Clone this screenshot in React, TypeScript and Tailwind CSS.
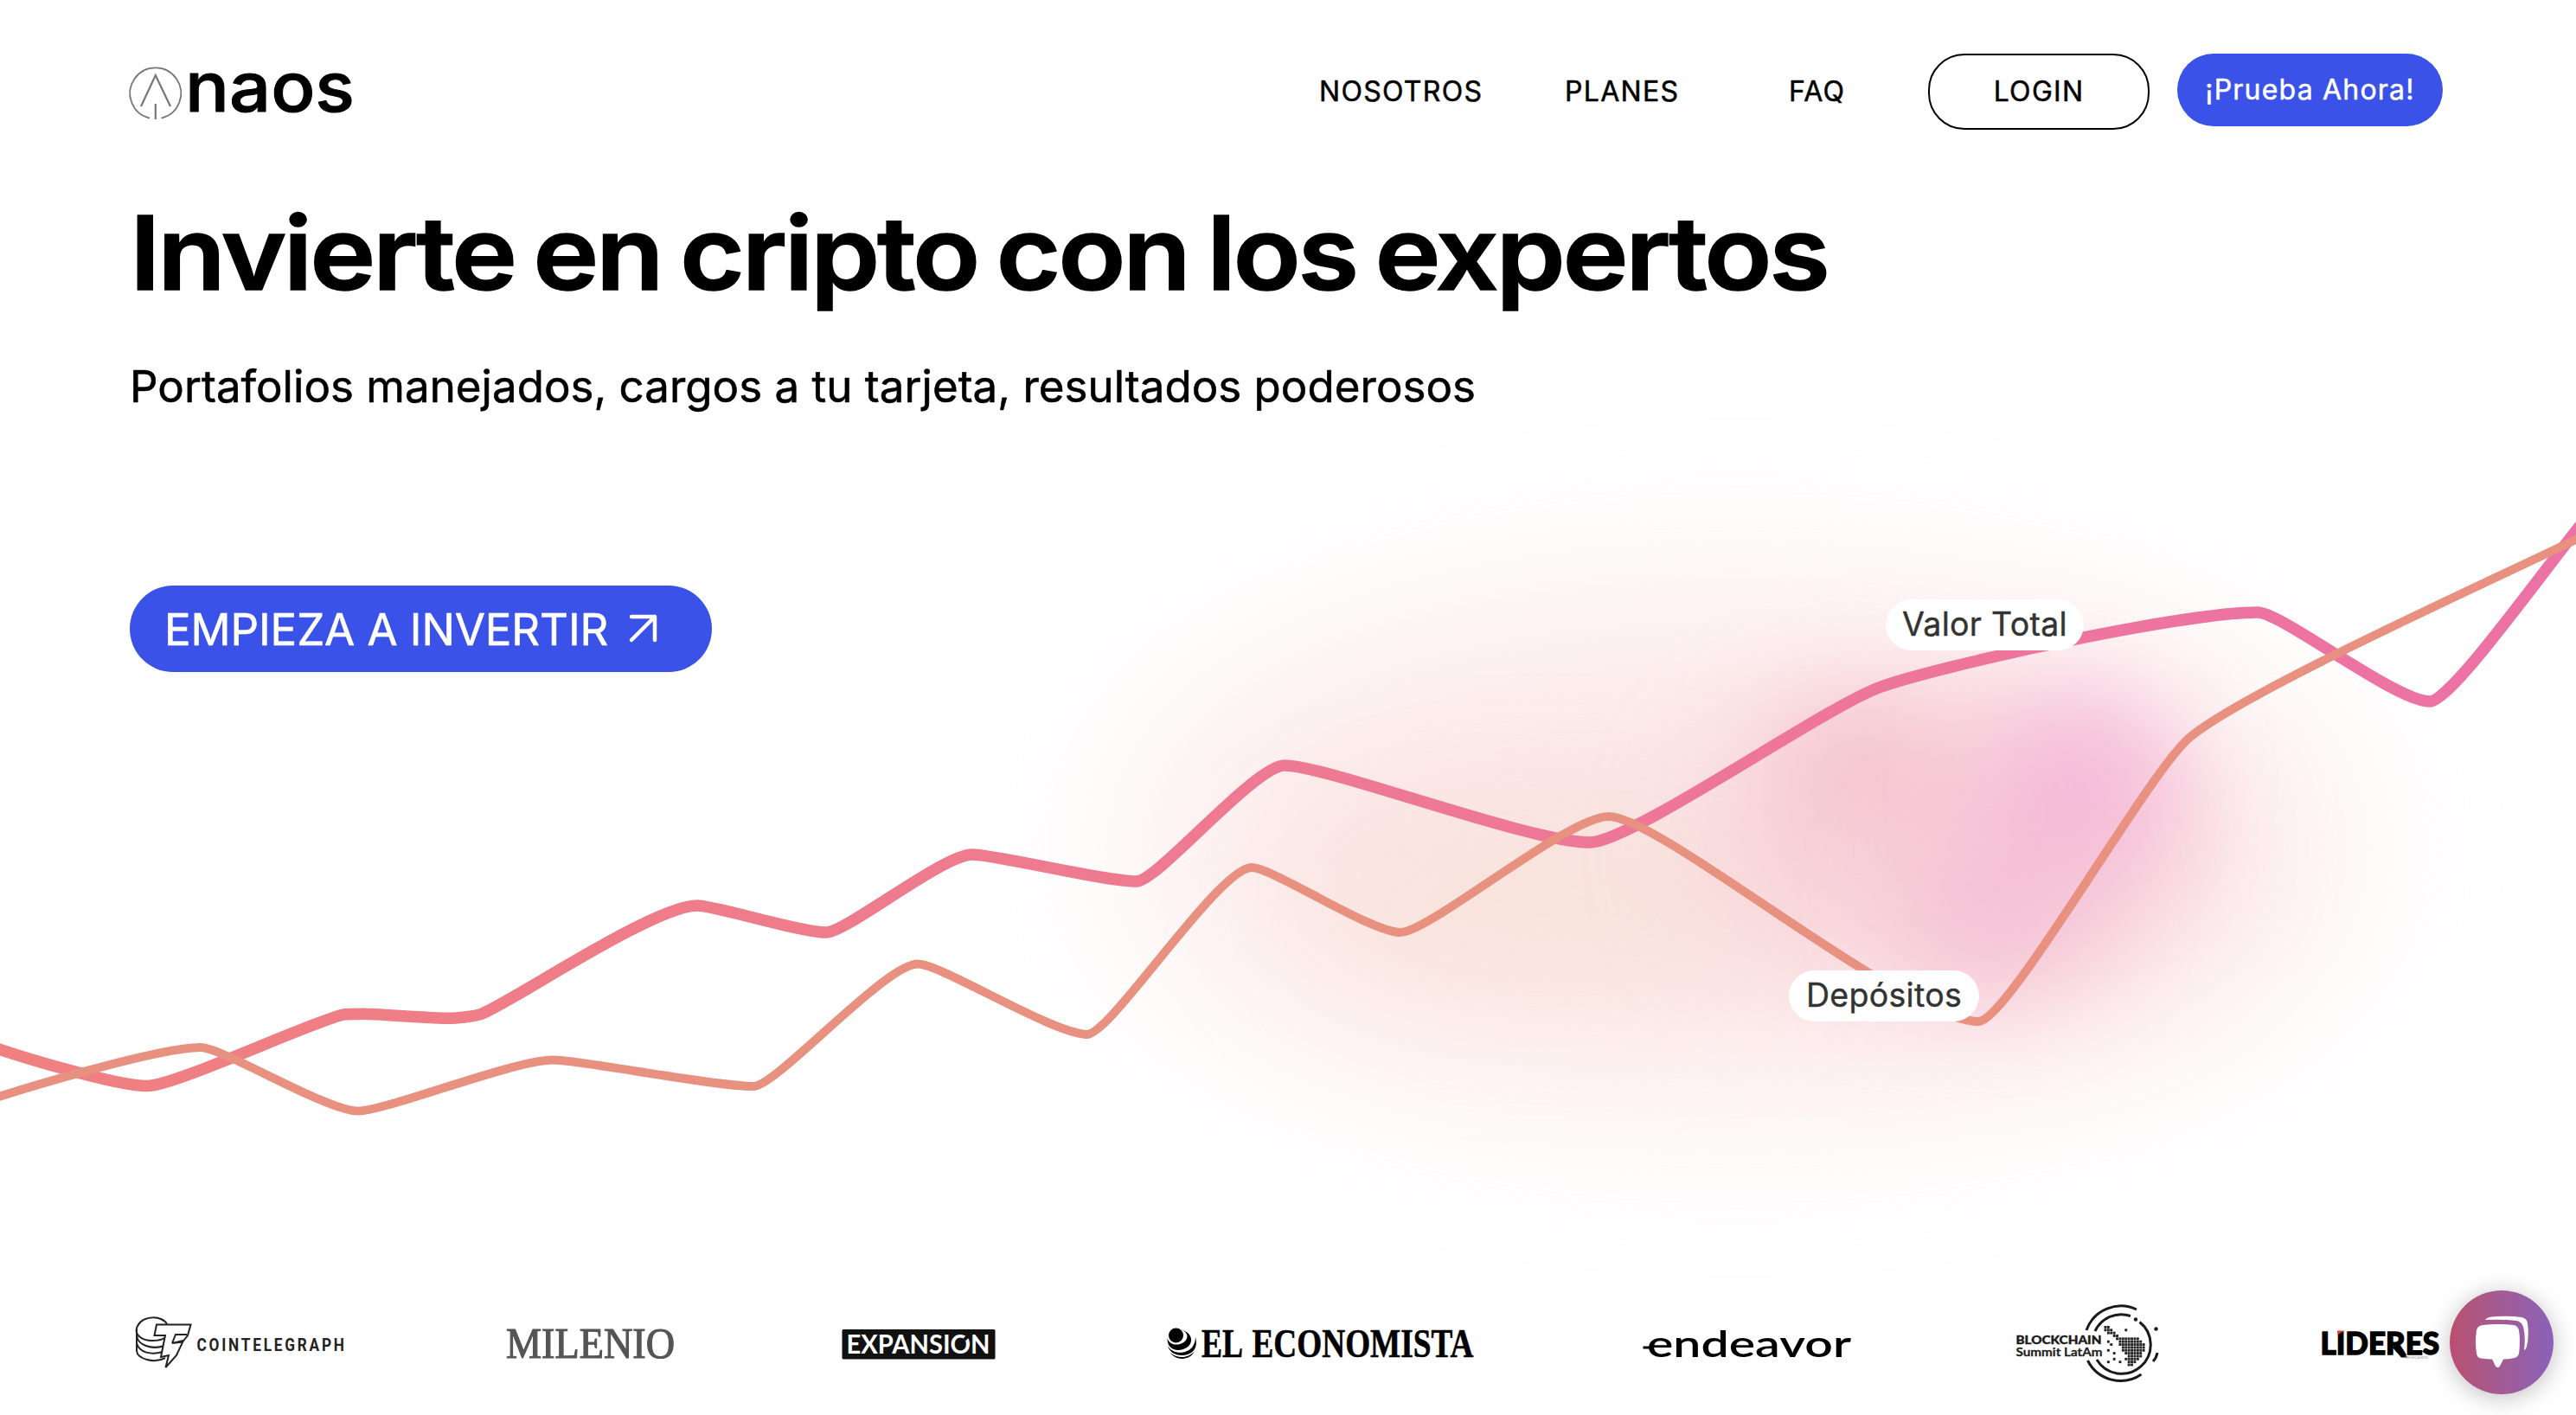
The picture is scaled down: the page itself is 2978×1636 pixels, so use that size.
import React from "react";

type Pt = [number, number, number?];

/* Vertices of a curve: x, y and an optional slope at the vertex (flat when left out). */
const total: Pt[] = [
  [-20, 1206, 0.4], [170, 1255.6], [395, 1173.5, -0.27], [420, 1172.3], [520, 1177.3], [556, 1172.5, -0.38], [806, 1047], [955, 1078], [1124, 988],
  [1314, 1019], [1485, 885], [1838, 974], [2172, 795, -0.38], [2610, 708], [2809, 811], [3000, 587, -1.1],
];
const deposits: Pt[] = [
  [-20, 1274, -0.33], [232, 1211], [414, 1284.6], [639, 1225.6], [871, 1256], [1061, 1114.6], [1257, 1196],
  [1447, 1003], [1619, 1078], [1860, 944], [2287, 1181], [2531, 853, -0.85], [3000, 613, -0.5],
];

function curve(points: Pt[]): string {
  let d = `M${points[0][0]} ${points[0][1]}`;
  for (let i = 1; i < points.length; i++) {
    const [x0, y0, s0 = 0] = points[i - 1];
    const [x1, y1, s1 = 0] = points[i];
    const a = (x1 - x0) * 0.14;
    const b = (x1 - x0) * 0.2;
    d += `C${x0 + a} ${y0 + a * s0} ${x1 - b} ${y1 - b * s1} ${x1} ${y1}`;
  }
  return d;
}

function Chart() {
  return (
    <svg className="absolute inset-0" width="2978" height="1636" viewBox="0 0 2978 1636" fill="none">
      <defs>
        <linearGradient id="total" x1="0" y1="0" x2="2978" y2="0" gradientUnits="userSpaceOnUse">
          <stop stopColor="#f08080" />
          <stop offset="1" stopColor="#ec72a5" />
        </linearGradient>
        <filter id="b130" x="-100%" y="-100%" width="300%" height="300%"><feGaussianBlur stdDeviation="118" /></filter>
        <filter id="b70" x="-100%" y="-100%" width="300%" height="300%"><feGaussianBlur stdDeviation="75" /></filter>
        <filter id="b50" x="-100%" y="-100%" width="300%" height="300%"><feGaussianBlur stdDeviation="58" /></filter>
      </defs>
      <ellipse cx="2010" cy="980" rx="680" ry="265" fill="#f6cccb" opacity=".5" filter="url(#b130)" />
      <ellipse cx="1780" cy="1050" rx="290" ry="110" fill="#f7dfd3" opacity=".52" filter="url(#b70)" />
      <ellipse cx="2270" cy="980" rx="290" ry="170" fill="#f6c0d0" opacity=".5" filter="url(#b70)" />
      <ellipse cx="2150" cy="880" rx="115" ry="75" fill="#f1b0bd" opacity=".5" filter="url(#b50)" />
      <ellipse cx="2405" cy="905" rx="110" ry="105" fill="#f3a8d6" opacity=".62" filter="url(#b50)" />
      <ellipse cx="2310" cy="1050" rx="115" ry="100" fill="#f2b2d0" opacity=".55" filter="url(#b50)" />
      <path d={curve(total)} stroke="url(#total)" strokeWidth="13.5" />
      <path d={curve(deposits)} stroke="#e89180" strokeWidth="10" />
    </svg>
  );
}

function NaosLogo() {
  return (
    <svg className="absolute left-[150px] top-[50px] overflow-visible" width="270" height="110" viewBox="150 50 270 110" fill="none">
      <path d="M173 136.600A29.500 29.500 0 1 1 186.500 136.600" stroke="#777" strokeWidth="1.800" />
      <path d="M163 123 179.800 87 197 123M179.800 120V138" stroke="#777" strokeWidth="2.200" />
      <text x="214" y="129" fontFamily="Inter" fontWeight="500" fontSize="80" stroke="#000" strokeWidth="1" textLength="196" lengthAdjust="spacingAndGlyphs" fill="#000">naos</text>
    </svg>
  );
}

function Cointelegraph() {
  return (
    <svg className="overflow-visible" width="245" height="100" viewBox="155 1502 245 100" fill="none" stroke="#222" strokeWidth="2">
      <path d="M193 1531C188 1521 166 1520 159 1533C154 1543 164 1550 176 1550C182 1550 187 1549 190 1547" />
      <path d="M158 1536V1562C159 1571 178 1577 191 1570M158 1544C159 1555 175 1561 190 1556M158 1553C161 1564 175 1567 188 1563" />
      <path d="M181 1531.500H220L217 1549H212L211 1552L206 1553L202 1560L212 1549L201 1569L192 1582L195 1567L185 1571L190 1551L192 1544L178 1543Z" fill="#fff" stroke="none" />
      <path d="M181 1531.500H220.500L217 1544L213 1549L211 1551.500L199 1553L212 1550L204 1567L191.500 1581L195 1567L186 1569L191 1544H178.500ZM216 1543H203L199 1553" />
      <g transform="translate(227.500 1561.500) scale(.84 1)">
        <text x="0" y="0" fontFamily="Roboto" fontWeight="700" fontSize="20.500" textLength="203" stroke="none" fill="#222">COINTELEGRAPH</text>
      </g>
    </svg>
  );
}

function Milenio() {
  return (
    <svg className="overflow-visible" width="200" height="100" viewBox="582 1502 200 100">
      <text x="585" y="1569.500" fontFamily="Liberation Serif" fontSize="50" fill="#555" stroke="#555" strokeWidth="1.200" textLength="195" lengthAdjust="spacingAndGlyphs">MILENIO</text>
    </svg>
  );
}

function Expansion() {
  return (
    <svg className="overflow-visible" width="178" height="100" viewBox="973 1502 178 100">
      <rect x="973.500" y="1537" width="177" height="34.500" rx="1.500" fill="#111" />
      <text x="978.500" y="1565" fontFamily="Lato" fontWeight="700" fontSize="30" fill="#fff" textLength="166" lengthAdjust="spacingAndGlyphs">EXPANSION</text>
      <path d="M1115 1549 1121 1542" stroke="#111" strokeWidth="4" />
    </svg>
  );
}

function Economista() {
  return (
    <svg className="overflow-visible" width="360" height="100" viewBox="1347 1502 360 100">
      <circle cx="1359.500" cy="1544" r="8.500" />
      <path d="M1363 1537C1376 1539 1375 1551 1364 1554C1357 1556 1351 1553 1349.500 1547C1349 1561 1362 1564 1372 1558C1381 1552 1378 1539 1363 1537Z" />
      <path d="M1350 1556C1355 1566 1371 1566 1378 1558C1381 1554 1382 1550 1382 1546C1386 1562 1375 1567 1366 1567C1358 1567 1352 1563 1350 1556Z" />
      <path d="M1353 1564C1361 1571 1374 1571 1381 1562C1376 1573 1360 1574 1353 1564Z" />
      <g fontFamily="Liberation Serif" fontWeight="700" fontSize="46.500" stroke="#000" strokeWidth=".6">
        <text x="1389" y="1568.500" textLength="48" lengthAdjust="spacingAndGlyphs">EL</text>
        <text x="1447.500" y="1568.500" textLength="256" lengthAdjust="spacingAndGlyphs">ECONOMISTA</text>
      </g>
    </svg>
  );
}

function Endeavor() {
  return (
    <svg className="overflow-visible" width="242" height="100" viewBox="1899 1502 242 100">
      <rect x="1899.500" y="1556.500" width="10" height="3" />
      <text x="1904" y="1569" fontFamily="Lato" fontWeight="600" fontSize="43" textLength="236" lengthAdjust="spacingAndGlyphs">endeavor</text>
    </svg>
  );
}

/* Each string is a row of the dotted map; "#" marks a filled cell. */
const mapRows = [
  "##.............", "###....#.......", ".###...........", "...##..........", "....########...",
  ".#...########..", "..#..#########.", "......########.", ".#....########.", "...#...######..",
  "........#####..", "...#...#####...", ".#...#..###....", "........##.....",
];

function BlockchainSummit() {
  return (
    <svg className="overflow-visible" width="165" height="100" viewBox="2330 1502 165 100" fill="none" stroke="#1a1a1a" strokeWidth="3">
      <path d="M2412 1538A42.500 42.500 0 0 1 2470 1514M2413.500 1573A42.500 42.500 0 0 0 2475.500 1589" />
      <path d="M2422 1539A33.500 33.500 0 0 1 2463 1521.500M2473.500 1528.500A33.500 33.500 0 1 1 2424 1572M2494 1564Q2493 1570 2489 1574" />
      <circle cx="2469" cy="1525.500" r="2.200" fill="#1a1a1a" stroke="none" />
      <circle cx="2492.500" cy="1536.500" r="2.200" fill="#1a1a1a" stroke="none" />
      <g fill="#222" stroke="none">
        {mapRows.flatMap((row, r) =>
          row.split("").map((c, i) =>
            c === "#" ? <rect key={r + "-" + i} x={2432.500 + i * 3.400} y={1533 + r * 3.350} width="2.900" height="2.900" /> : null
          )
        )}
      </g>
      <g stroke="#1a1a1a" strokeWidth=".4" fill="#1a1a1a" fontFamily="Lato">
        <text x="2330.500" y="1554" fontWeight="900" fontSize="14" textLength="99" lengthAdjust="spacingAndGlyphs">BLOCKCHAIN</text>
        <text x="2330.500" y="1567.500" fontWeight="600" fontSize="14" textLength="100" lengthAdjust="spacingAndGlyphs">Summit LatAm</text>
      </g>
    </svg>
  );
}

function Lideres() {
  return (
    <svg className="overflow-visible" width="138" height="100" viewBox="2683 1502 138 100">
      <text x="2682.500" y="1566" fontFamily="Lato" fontWeight="900" fontSize="36.500" stroke="#000" strokeWidth="1.500" textLength="137.500" lengthAdjust="spacingAndGlyphs">LIDERES</text>
      <path d="M2765 1557 2775 1557 2783 1569.500H2776Z" />
      <path d="M2702 1538.500H2711L2702.500 1543Z" fill="#e23b2e" />
      <text x="2780" y="1570.500" fontFamily="Lato" fontSize="4.500" fill="#999" textLength="27">MEXICANOS</text>
    </svg>
  );
}

function ChatButton() {
  return (
    <button className="absolute left-[2832px] top-[1492px] size-[120px] rounded-full bg-linear-to-r from-[#b94f70] to-[#8a61b8] shadow-[0_4px_28px_rgba(0,0,0,0.25)]">
      <svg width="120" height="120" viewBox="2832 1492 120 120" fill="#fff">
        <path d="M2873 1526Q2875 1523 2880 1522.500Q2900 1521 2915 1523Q2921 1524 2922 1530Q2924 1545 2921 1557Q2920 1560 2918 1561Q2920 1545 2917 1534Q2915 1528 2909 1527Q2895 1525 2873 1526Z" />
        <path d="M2870 1532Q2888 1530 2906 1532Q2911 1533 2912 1538Q2914 1551 2912 1565Q2911 1569 2907 1570Q2900 1571.500 2894 1571.500L2890 1579.500Q2887.500 1582.500 2885 1579.500L2881 1571.500Q2874 1571.500 2868 1570.500Q2864 1570 2863 1565Q2861 1551 2863 1538Q2864 1533 2870 1532Z" />
      </svg>
    </button>
  );
}

export default function App() {
  return (
    <div className="relative h-[1636px] w-[2978px] overflow-hidden bg-white font-[Inter,sans-serif] text-black">
      <Chart />
      <div className="relative flex h-full flex-col">
        <header className="flex h-[150px] items-start pt-[62px] pl-[1525px] text-[32px] leading-none [-webkit-text-stroke:0.5px]">
          <NaosLogo />
          <nav className="flex h-[88px] items-center whitespace-nowrap tracking-[1.3px]">
            <a className="w-[284px]">NOSOTROS</a>
            <a className="w-[259px]">PLANES</a>
            <a className="w-[161px]">FAQ</a>
          </nav>
          <a className="flex h-[88px] w-[256px] items-center justify-center rounded-[42px] border-2 border-black bg-white tracking-[1.3px]">LOGIN</a>
          <a className="ml-[32px] flex h-[84px] w-[307px] items-center justify-center rounded-[42px] bg-[#3b52e8] tracking-[1.2px] whitespace-nowrap text-white">¡Prueba Ahora!</a>
        </header>
        <main className="flex flex-col items-start pl-[150px]">
          <h1 className="mt-[83px] origin-left scale-x-[1.09] text-[118px] leading-[118px] font-semibold tracking-[-3px] [word-spacing:-7px] whitespace-nowrap [-webkit-text-stroke:1.5px]">Invierte en cripto con los expertos</h1>
          <p className="mt-[70px] text-[51px] leading-[51px] tracking-[0.03px] whitespace-nowrap [-webkit-text-stroke:0.6px]">Portafolios manejados, cargos a tu tarjeta, resultados poderosos</p>
          <button className="mt-[205px] flex h-[100px] w-[673px] items-center rounded-full bg-[#3b52e8] pl-[40px] text-[51px] leading-none tracking-[-0.1px] whitespace-nowrap text-white">
            <span className="w-[536px] text-left [-webkit-text-stroke:0.6px]">EMPIEZA A INVERTIR</span>
            <svg width="36" height="36" viewBox="0 0 36 36" fill="none" stroke="#fff" strokeWidth="4.500" strokeLinecap="round" strokeLinejoin="round"><path d="M4 4H31V31M4 31 31 4" /></svg>
          </button>
        </main>
        <footer className="mt-auto mb-[34px] flex h-[100px] items-center pl-[155px]">
          <Cointelegraph />
          <div className="ml-[182px]"><Milenio /></div>
          <div className="ml-[191px]"><Expansion /></div>
          <div className="ml-[196px]"><Economista /></div>
          <div className="ml-[192px]"><Endeavor /></div>
          <div className="ml-[189px]"><BlockchainSummit /></div>
          <div className="ml-[188px]"><Lideres /></div>
        </footer>
      </div>
      <span className="absolute top-[693px] left-[2180px] flex h-[59px] w-[229px] items-center justify-center rounded-full bg-white text-[37.500px] tracking-[0.3px] whitespace-nowrap text-[#333] [-webkit-text-stroke:0.4px]">Valor Total</span>
      <span className="absolute top-[1122px] left-[2068px] flex h-[59px] w-[220px] items-center justify-center rounded-full bg-white text-[37.500px] tracking-[0.3px] whitespace-nowrap text-[#333] [-webkit-text-stroke:0.4px]">Depósitos</span>
      <ChatButton />
    </div>
  );
}
